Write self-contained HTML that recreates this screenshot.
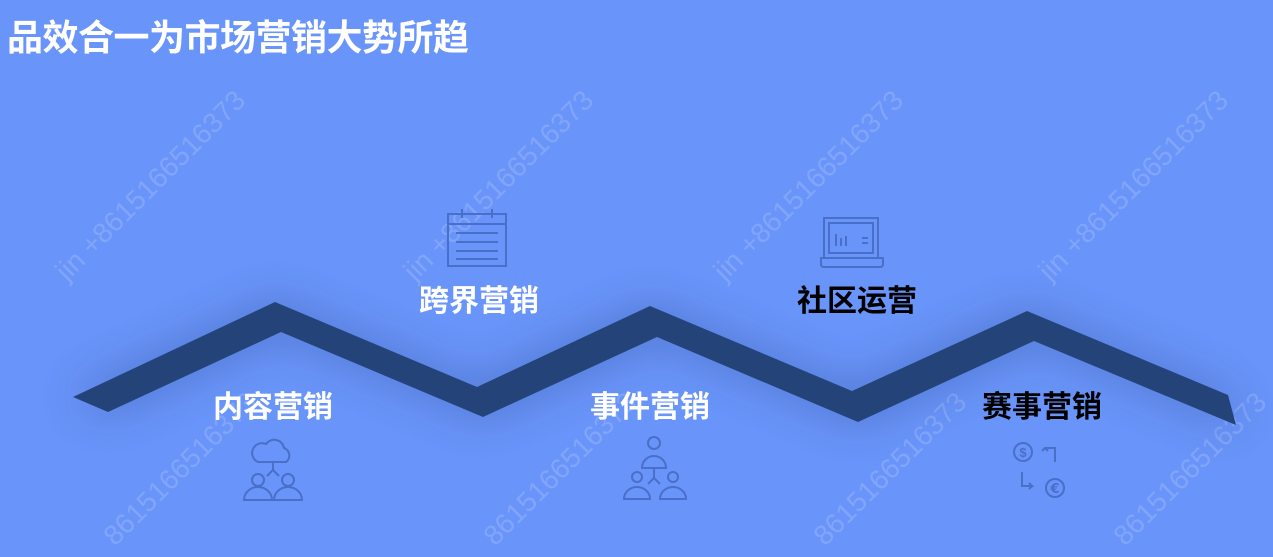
<!DOCTYPE html>
<html><head><meta charset="utf-8"><style>
html,body{margin:0;padding:0}
body{width:1273px;height:557px;overflow:hidden;background:#6994f9;position:relative;font-family:"Liberation Sans","Noto Sans CJK SC",sans-serif}
.t{position:absolute;font-weight:bold;white-space:nowrap;transform:translateX(-50%);font-size:30px;line-height:32px}
.w{color:#fff}.b{color:#000}
.wm{position:absolute;color:rgba(255,255,255,0.16);font-size:28px;transform:rotate(-45deg);transform-origin:left bottom;white-space:nowrap}
</style></head><body>
<div style="position:absolute;left:7px;top:17px;font-size:36px;font-weight:bold;color:#fff;line-height:42px;letter-spacing:-0.5px">品效合一为市场营销大势所趋</div>
<div class="wm" style="left:72px;top:255px">jin +8615166516373</div>
<div class="wm" style="left:420px;top:255px">jin +8615166516373</div>
<div class="wm" style="left:730px;top:255px">jin +8615166516373</div>
<div class="wm" style="left:1055px;top:255px">jin +8615166516373</div>
<div class="wm" style="left:120px;top:520px">8615166516373</div>
<div class="wm" style="left:500px;top:520px">8615166516373</div>
<div class="wm" style="left:830px;top:520px">8615166516373</div>
<div class="wm" style="left:1130px;top:520px">8615166516373</div>
<svg width="1273" height="557" style="position:absolute;left:0;top:0">
<defs><filter id="f" x="-20%" y="-50%" width="140%" height="200%"><feGaussianBlur stdDeviation="22"/></filter></defs>
<g fill="#2a4a8a" opacity="0.45" filter="url(#f)"><polygon points="73,397 275,302 477,387 650,306 852,391 1027,311 1228,395 1236,425 1034,341 858,422 657,337 483,417 281,332 108,412"/></g>
<polygon fill="#244479" points="73,397 275,302 477,387 650,306 852,391 1027,311 1228,395 1236,425 1034,341 858,422 657,337 483,417 281,332 108,412"/>
<g fill="none" stroke="#4a6fc8" stroke-width="2">
<rect x="448" y="214" width="58" height="52"/><line x1="448" y1="224" x2="506" y2="224"/><line x1="462" y1="209" x2="462" y2="218"/><line x1="492" y1="209" x2="492" y2="218"/>
<line x1="456" y1="233" x2="498" y2="233"/><line x1="456" y1="242" x2="498" y2="242"/><line x1="456" y1="251" x2="498" y2="251"/><line x1="456" y1="259" x2="498" y2="259"/>
<rect x="824" y="218" width="54" height="40"/><rect x="829" y="223" width="44" height="30"/><path d="M821 258 v6 q0 3 3 3 h56 q3 0 3 -3 v-6 z"/>
<line x1="836" y1="234" x2="836" y2="246"/><line x1="841" y1="238" x2="841" y2="246"/><line x1="846" y1="236" x2="846" y2="246"/><line x1="862" y1="238" x2="868" y2="238"/><line x1="862" y1="243" x2="868" y2="243"/>
<path d="M258 462 h28 a8 8 0 0 0 -2 -14 a10 10 0 0 0 -18 -4 a8 8 0 0 0 -8 18 z"/><path d="M273 462 v8 l-6 6 M273 470 l6 6"/>
<circle cx="258" cy="480" r="6"/><circle cx="288" cy="480" r="6"/><path d="M244 500 a14 13 0 0 1 28 0 z M274 500 a14 13 0 0 1 28 0 z"/>
<circle cx="654" cy="443" r="6"/><path d="M642 468 a12 12 0 0 1 24 0 z"/><path d="M654 468 v10 l-6 6 M654 478 l6 6"/>
<circle cx="637" cy="477" r="5"/><circle cx="673" cy="477" r="5"/><path d="M624 499 a13 12 0 0 1 26 0 z M660 499 a13 12 0 0 1 26 0 z"/>
<circle cx="1023" cy="452" r="9"/><circle cx="1055" cy="488" r="9"/><path d="M1045 448 h10 v14 M1042 451 l3 -3 3 3"/><path d="M1022 472 v14 h10 l-3 -3 M1032 486 l-3 3"/>
</g>
<text x="1023" y="457" font-size="13" fill="#4a6fc8" text-anchor="middle" font-weight="bold" font-family="Liberation Sans">$</text>
<text x="1055" y="493" font-size="13" fill="#4a6fc8" text-anchor="middle" font-weight="bold" font-family="DejaVu Sans">€</text>
</svg>
<div class="t w" style="left:479px;top:286px">跨界营销</div>
<div class="t b" style="left:857px;top:286px">社区运营</div>
<div class="t w" style="left:273px;top:392px">内容营销</div>
<div class="t w" style="left:650px;top:392px">事件营销</div>
<div class="t b" style="left:1042px;top:392px">赛事营销</div>
</body></html>
